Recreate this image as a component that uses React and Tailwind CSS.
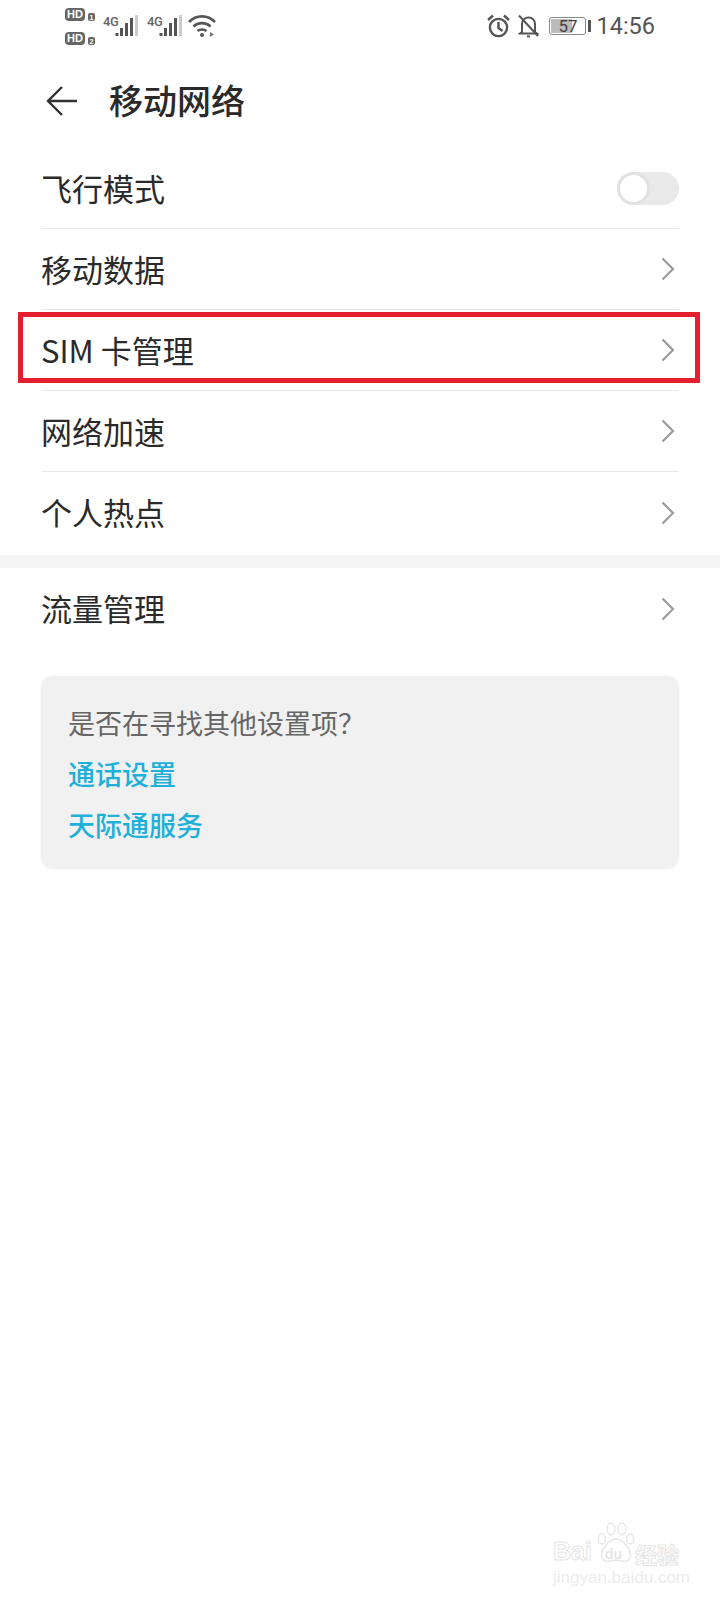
import React from "react";

const font = "[font-family:'Noto_Sans_CJK_SC','Noto_Sans',sans-serif]";

function Hd({ n }) {
  return (
    <div className="flex items-end gap-[3px]">
      <span className="flex h-[13px] w-[20px] items-center justify-center rounded-[4px] bg-[#666] text-[11px] font-bold leading-none text-white [font-family:'Liberation_Sans',sans-serif]">HD</span>
      <span className="flex h-[8px] w-[7px] items-center justify-center rounded-[2px] bg-[#666] text-[7px] font-bold leading-none text-white [font-family:'Liberation_Sans',sans-serif]">{n}</span>
    </div>
  );
}

function Signal() {
  return (
    <div className="relative h-[24px] w-[35px]">
      <span className="absolute left-0 top-[1px] text-[13px] font-medium leading-[13px] tracking-[-0.5px] text-[#666] [font-family:'Roboto',sans-serif]">4G</span>
      <svg className="absolute left-[12px] top-[1px]" width="23" height="22" viewBox="0 0 23 22">
        <rect x="0.5" y="18" width="3" height="3" fill="#555" />
        <rect x="5" y="13" width="3" height="8" fill="#555" />
        <rect x="10" y="8" width="3" height="13" fill="#555" />
        <rect x="15" y="3" width="3" height="18" fill="#555" />
        <rect x="20" y="0" width="3" height="21" fill="#ccc" />
      </svg>
    </div>
  );
}

function Chevron() {
  return (
    <svg width="14" height="24" viewBox="0 0 14 24" fill="none" stroke="#9a9a9a" strokeWidth="2.2">
      <path d="M1.5 1.5 L12 12 L1.5 22.5" />
    </svg>
  );
}

function Row({ label, children, last }) {
  return (
    <div className={`flex h-[81px] items-center justify-between pr-[4px] ${last ? "" : "border-b border-[#e8e8e8]"}`}>
      <span className="-ml-[1px] -translate-y-[1px] text-[31px] leading-none text-[#2a2a2a]">{label}</span>
      {children || <Chevron />}
    </div>
  );
}

export default function App() {
  return (
    <div className={`relative h-[1600px] w-[720px] overflow-hidden bg-white ${font}`}>
      {/* status bar */}
      <div className="flex h-[60px] items-start justify-between pl-[65px] pr-[65px]">
        <div className="flex items-start">
          <div className="mt-[8px] flex flex-col gap-[11px]">
            <Hd n="1" />
            <Hd n="2" />
          </div>
          <div className="ml-[8px] mt-[14px]"><Signal /></div>
          <div className="ml-[9px] mt-[14px]"><Signal /></div>
          <svg className="ml-[6px] mt-[14px]" width="28" height="24" viewBox="0 0 28 24" fill="none" stroke="#555" strokeWidth="2.6">
            <path d="M1 8 C8 0.5 20 0.5 27 8" />
            <path d="M5.5 12.5 C10 8 18 8 22.5 12.5" />
            <path d="M9.5 17 C12 15 16 15 18.5 17" />
            <circle cx="14" cy="21" r="2" fill="#555" stroke="none" />
            <path d="M22 18 L22 23 L26 20.5 Z" fill="#777" stroke="none" />
          </svg>
        </div>
        <div className="mt-[14px] flex items-center">
          <svg width="23" height="24" viewBox="0 0 23 24" fill="none" stroke="#555" strokeWidth="2.4">
            <circle cx="11.5" cy="13.5" r="8.6" />
            <path d="M11.5 8 L11.5 14 L15.5 17" />
            <path d="M1 6 L6 1.5 M22 6 L17 1.5" />
          </svg>
          <svg className="ml-[8px]" width="21" height="24" viewBox="0 0 21 24" fill="none" stroke="#555" strokeWidth="2">
            <path d="M4 18 L4 10 C4 6 7 3.5 10.5 3.5 C14 3.5 17 6 17 10 L17 18 L19 19.5 L2 19.5 Z" />
            <path d="M1 1.5 L20 22" />
            <path d="M9 22.5 L12 22.5" />
          </svg>
          <div className="relative ml-[10px] flex h-[18px] w-[37px] items-center justify-center overflow-hidden rounded-[3px] border border-[#888]">
            <div className="absolute inset-y-[1px] left-[1px] w-[21px] bg-[#bbb]" />
            <span className="relative text-[17px] leading-none text-[#444] [font-family:'Roboto',sans-serif]">57</span>
          </div>
          <div className="ml-[2px] h-[12px] w-[3px] bg-[#555]" />
          <span className="ml-[5px] text-[23.5px] leading-[24px] text-[#555] [font-family:'Roboto',sans-serif]">14:56</span>
        </div>
      </div>

      {/* header */}
      <div className="flex h-[88px] items-center pl-[46px]">
        <svg className="-translate-y-[3px]" width="32" height="32" viewBox="0 0 32 32" fill="none" stroke="#333" strokeWidth="2.4">
          <path d="M16 2 L2 16 L16 30 M2 16 L31 16" />
        </svg>
        <h1 className="ml-[31px] -translate-y-[4px] text-[34px] font-medium leading-none text-[#2a2a2a]">移动网络</h1>
      </div>

      {/* rows */}
      <div className="pl-[42px] pr-[41px]">
        <Row label="飞行模式">
          <div className="relative -mr-[4px] h-[33px] w-[62px] rounded-full bg-[#e9e9e9]">
            <div className="absolute left-0 top-0 h-[33px] w-[33px] rounded-full border-[3px] border-[#e2e2e2] bg-white" />
          </div>
        </Row>
        <Row label="移动数据" />
        <Row label="SIM 卡管理" />
        <Row label="网络加速" />
        <Row label="个人热点" last />
      </div>

      <div className="mt-[2px] h-[13px] bg-[#f5f5f5]" />

      <div className="pl-[42px] pr-[41px]">
        <Row label="流量管理" last />
      </div>

      {/* card */}
      <div className="mx-[41px] mt-[27px] h-[193px] rounded-[12px] bg-[#f1f1f1] pl-[27px] pt-[21px] text-[27px] leading-[51px] shadow-[0_0_4px_rgba(0,0,0,0.05)]">
        <p className="text-[#666]">是否在寻找其他设置项？</p>
        <p className="font-medium text-[#1fb0d9]">通话设置</p>
        <p className="font-medium text-[#1fb0d9]">天际通服务</p>
      </div>

      {/* red annotation */}
      <div className="absolute left-[18px] top-[312px] h-[71px] w-[682px] border-[5px] border-[#e5202e]" />

      {/* watermark */}
      <div className="absolute left-[553px] top-[1522px] h-[64px] w-[130px]">
        <span className="absolute left-0 top-[14px] text-[25px] font-bold leading-[30px] text-white [font-family:'Liberation_Sans',sans-serif] [-webkit-text-stroke:1px_#e6e6e6]">Bai</span>
        <svg className="absolute left-[44px] top-0" width="38" height="42" viewBox="0 0 38 42" fill="none" stroke="#e6e6e6" strokeWidth="1.3">
          <ellipse cx="5" cy="17" rx="3.6" ry="5" />
          <ellipse cx="14" cy="7" rx="4" ry="6" />
          <ellipse cx="25" cy="7" rx="4" ry="6" />
          <ellipse cx="33" cy="17" rx="3.6" ry="5" />
          <path d="M19 17 C25 17 36 28 33 36 C30 42 24 38 19 38 C14 38 8 42 5 36 C2 28 13 17 19 17 Z" />
        </svg>
        <span className="absolute left-[52px] top-[24px] text-[14px] font-bold leading-[16px] text-[#e6e6e6] [font-family:'Liberation_Sans',sans-serif]">du</span>
        <span className="absolute left-[82px] top-[19px] text-[22px] font-bold leading-[24px] text-white [-webkit-text-stroke:1px_#e6e6e6]">经验</span>
        <span className="absolute left-0 top-[47px] text-[17px] leading-[18px] text-[#ececec] [font-family:'Liberation_Sans',sans-serif]">jingyan.baidu.com</span>
      </div>
    </div>
  );
}
